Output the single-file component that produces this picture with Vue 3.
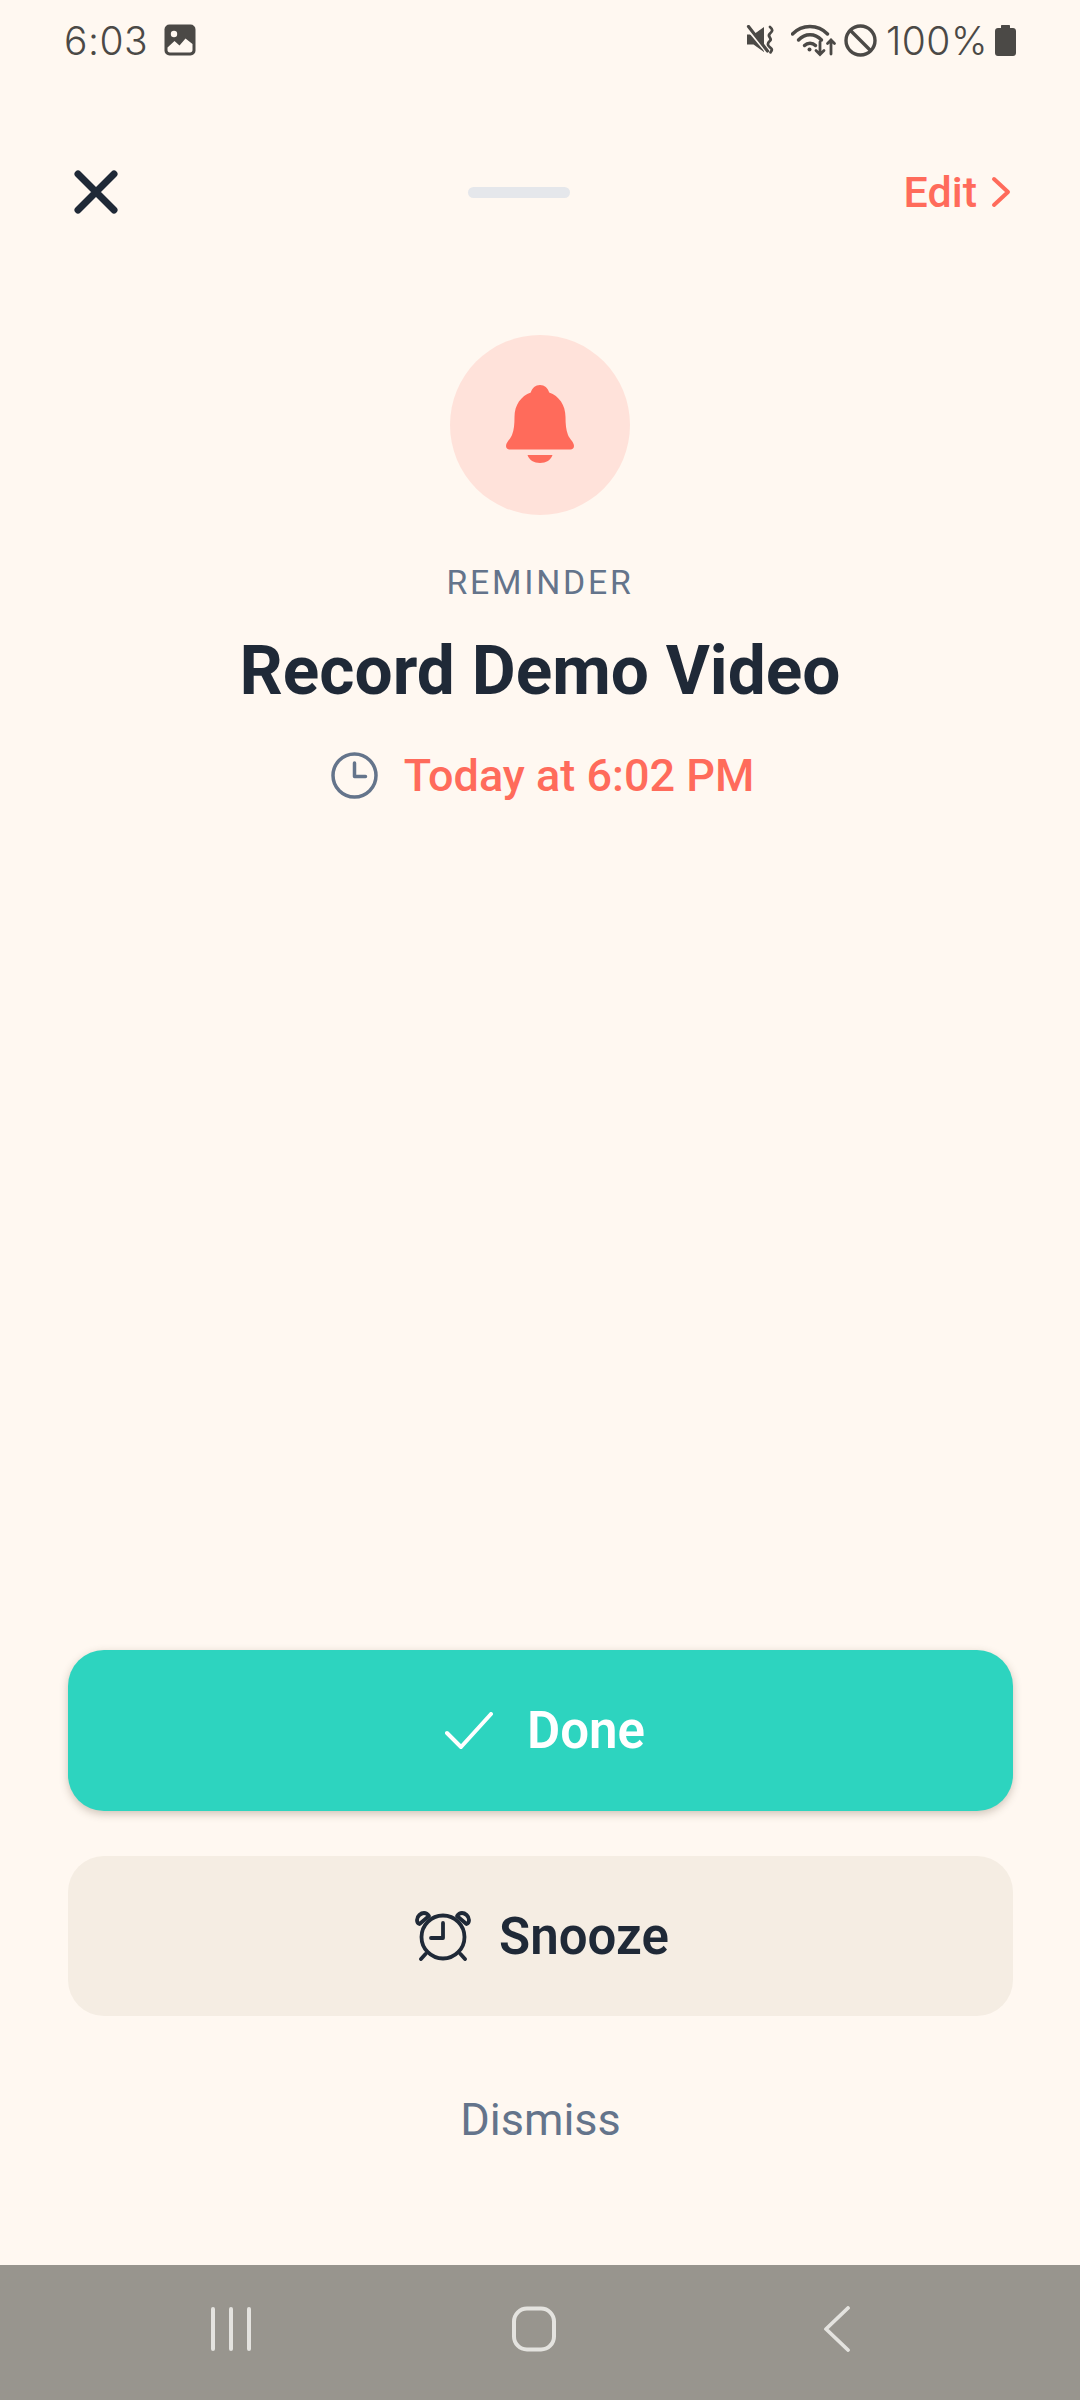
<script setup>
const title = 'Record Demo Video'
const when = 'Today at 6:02 PM'
</script>

<template>
  <div class="screen">
    <div class="status">
      <div class="status-left">
        <span class="time">6:03</span>
        <svg class="ic-photo" width="32" height="32" viewBox="0 0 32 32">
          <rect width="31" height="31" x="0.5" y="0.5" rx="5" fill="#4b4946" />
          <circle cx="10" cy="10" r="3.2" fill="#fff8f1" />
          <path d="M3.5 23.5 10.5 17l5 4.5 6-7 7 5.5v6c0 1.6-1 2.5-2.5 2.5h-20C4.400 28.500 3.500 27.500 3.500 26z" fill="#fff8f1" />
        </svg>
      </div>
      <div class="status-right">
        <svg class="ic-mute" width="30" height="30" viewBox="0 0 30 30" fill="none">
          <path d="M1 9.500h6.500L18 2v25L7.500 19.500H1z" fill="#4b4946" />
          <path d="M0 1.500 21 27" stroke="#fff8f1" stroke-width="3.500" />
          <path d="M2.500 1.500 21.500 26" stroke="#4b4946" stroke-width="3.200" stroke-linecap="round" />
          <path d="M24 2c3 2.500 3 4-.2 6.800s3 4.500.2 7-2.800 4.500 0 6.500 2 3 .5 5" stroke="#4b4946" stroke-width="2.800" stroke-linecap="round" stroke-linejoin="round" />
        </svg>
        <svg class="ic-wifi" width="46" height="34" viewBox="0 0 46 34" fill="none" stroke="#4b4946" stroke-linecap="round">
          <path d="M1.500 11C11 1 27 1 36.500 11" stroke-width="3.400" />
          <path d="M7.500 17C14 10 24 10 30.500 17" stroke-width="3.400" />
          <path d="M13.500 22.500c3-3 8-3 11 0" stroke-width="3.400" />
          <circle cx="18.500" cy="26.500" r="2" fill="#4b4946" stroke="none" />
          <path d="M29 19v12M25 27.500l4 4 4-4" stroke-width="2.800" />
          <path d="M40 31V17M36.500 20.500 40 17l3.500 3.500" stroke-width="2.800" />
        </svg>
        <svg class="ic-block" width="33" height="33" viewBox="0 0 33 33" fill="none" stroke="#4b4946" stroke-width="3.400">
          <circle cx="16.500" cy="16.500" r="14.500" />
          <path d="M6.500 6.500 26.500 26.500" />
        </svg>
        <span class="pct">100%</span>
        <svg class="ic-batt" width="21" height="31" viewBox="0 0 21 31">
          <path d="M7 0h7c.6 0 1 .4 1 1v2h3c1.700 0 3 1.300 3 3v22c0 1.700-1.300 3-3 3H3c-1.700 0-3-1.300-3-3V6c0-1.700 1.300-3 3-3h3V1c0-.6.4-1 1-1z" fill="#4b4946" />
        </svg>
      </div>
    </div>

    <div class="topbar">
      <svg class="close" width="44" height="44" viewBox="0 0 44 44" fill="none" stroke="#1f2937" stroke-width="7" stroke-linecap="round">
        <path d="M4 4 40 40M40 4 4 40" />
      </svg>
      <span class="handle"></span>
      <div class="edit">
        <span>Edit</span>
        <svg width="20" height="32" viewBox="0 0 20 32" fill="none" stroke="#ff6b5b" stroke-width="4" stroke-linecap="round" stroke-linejoin="round">
          <path d="M3 3 17 16 3 29" />
        </svg>
      </div>
    </div>

    <div class="hero">
      <div class="bell-wrap">
        <svg class="bell" width="68" height="78" viewBox="0 0 68 78">
          <path d="M34 0c4.500 0 8 3 9.200 7.500C53 11 59.500 20 59.500 32c0 7 .5 13 2.500 18 1.500 4 6 7 6 11 0 2-1.500 3.500-3.500 3.500h-61C1.500 64.500 0 63 0 61c0-4 4.500-7 6-11 2-5 2.500-11 2.500-18C8.500 20 15 11 24.800 7.500 26 3 29.500 0 34 0z" fill="#ff6b5b" />
          <path d="M21.500 70h25C45 75 40 78 34 78s-11-3-12.500-8z" fill="#ff6b5b" />
        </svg>
      </div>
      <div class="label">REMINDER</div>
      <h1 class="title">{{ title }}</h1>
      <div class="when">
        <svg width="47" height="47" viewBox="0 0 47 47" fill="none" stroke="#64748b" stroke-width="3.500" stroke-linecap="round" stroke-linejoin="round">
          <circle cx="23.500" cy="23.500" r="21.500" />
          <path d="M23.500 11v13.500h11" />
        </svg>
        <span>{{ when }}</span>
      </div>
    </div>

    <div class="actions">
      <button class="btn done">
        <svg width="48" height="38" viewBox="0 0 48 38" fill="none" stroke="#fff" stroke-width="4" stroke-linecap="round" stroke-linejoin="round">
          <path d="M2 21 16 35 46 2" />
        </svg>
        <span>Done</span>
      </button>
      <button class="btn snooze">
        <svg width="56" height="50" viewBox="0 0 56 50" fill="none" stroke="#1f2937" stroke-width="3.800" stroke-linecap="round" stroke-linejoin="round">
          <circle cx="28" cy="26" r="21.500" />
          <path d="M28 12v15H16" />
          <path d="M6 48l4.500-5M50 48l-4.500-5" />
          <path d="M2 9c0-4 4-7 7-7 2 0 4 1.500 5 3L4.500 13C3 12.500 2 11 2 9z" />
          <path d="M54 9c0-4-4-7-7-7-2 0-4 1.500-5 3l9.500 8C53 12.500 54 11 54 9z" />
        </svg>
        <span>Snooze</span>
      </button>
      <div class="dismiss">Dismiss</div>
    </div>

    <div class="nav">
      <div class="nav-cell">
        <svg width="42" height="46" viewBox="0 0 42 46" stroke="#e4e3df" stroke-width="4" stroke-linecap="round">
          <path d="M3 3v40M21 3v40M39 3v40" />
        </svg>
      </div>
      <div class="nav-cell">
        <svg width="46" height="46" viewBox="0 0 46 46" fill="none" stroke="#e4e3df" stroke-width="4">
          <rect x="3" y="2.500" width="40" height="41" rx="13" />
        </svg>
      </div>
      <div class="nav-cell">
        <svg width="28" height="46" viewBox="0 0 28 46" fill="none" stroke="#e4e3df" stroke-width="3.800" stroke-linecap="round" stroke-linejoin="round">
          <path d="M25 2 3 23 25 44" />
        </svg>
      </div>
    </div>
  </div>
</template>

<style>
html,
body {
  margin: 0;
  background: #fff8f1;
}
</style>

<style scoped>
.screen {
  width: 1080px;
  height: 2400px;
  display: flex;
  flex-direction: column;
  background: #fff8f1;
  font-family: Roboto, "Liberation Sans", sans-serif;
  overflow: hidden;
}

.status {
  height: 80px;
  box-sizing: border-box;
  padding: 0 64px 0 64px;
  display: flex;
  justify-content: space-between;
  align-items: center;
  color: #4b4946;
  font-family: Inter, Roboto, sans-serif;
  font-size: 39px;
  font-weight: 300;
  letter-spacing: 0.5px;
}
.status-left,
.status-right {
  display: flex;
  align-items: center;
}
.status-left {
  gap: 16px;
}
.ic-wifi {
  margin-left: 15px;
}
.ic-block {
  margin-left: 7px;
}
.pct {
  margin-left: 9px;
}
.ic-batt {
  margin-left: 7px;
}

.topbar {
  margin-top: 80px;
  height: 64px;
  padding: 0 69px 0 74px;
  display: flex;
  align-items: center;
  justify-content: space-between;
  position: relative;
}
.handle {
  position: absolute;
  left: 468px;
  top: 27px;
  width: 102px;
  height: 11px;
  border-radius: 6px;
  background: #e5e7eb;
}
.edit {
  display: flex;
  align-items: center;
  gap: 14px;
  color: #ff6b5b;
  font-size: 43px;
  font-weight: 500;
}

.hero {
  margin-top: 111px;
  display: flex;
  flex-direction: column;
  align-items: center;
}
.bell-wrap {
  width: 180px;
  height: 180px;
  border-radius: 50%;
  background: #ffe2da;
  display: flex;
  align-items: center;
  justify-content: center;
}
.bell {
  margin-bottom: 3px;
}
.label {
  margin-top: 48px;
  color: #64748b;
  font-size: 33.750px;
  line-height: 40px;
  letter-spacing: 2.800px;
}
.title {
  margin: 24px 0 0;
  color: #1f2937;
  font-size: 67.600px;
  line-height: 88px;
  font-weight: 700;
}
.when {
  margin-top: 34px;
  padding-left: 5px;
  display: flex;
  align-items: center;
  gap: 26px;
  color: #ff6b5b;
  font-size: 45px;
  font-weight: 500;
}

.actions {
  margin-top: auto;
  padding: 0 67px 0 68px;
  display: flex;
  flex-direction: column;
  align-items: stretch;
}
.btn {
  border: 0;
  border-radius: 36px;
  display: flex;
  align-items: center;
  justify-content: center;
  font-family: inherit;
  font-size: 51px;
  font-weight: 600;
}
.done {
  height: 161px;
  gap: 34px;
  padding-left: 15px;
  background: #2dd4bf;
  color: #fff;
  box-shadow: 0 3px 8px rgba(80, 60, 40, 0.28);
}
.snooze {
  height: 160px;
  gap: 28px;
  padding-left: 9px;
  margin-top: 45px;
  background: #f5ede3;
  color: #1f2937;
}
.dismiss {
  margin-top: 76px;
  margin-bottom: 117px;
  text-align: center;
  color: #64748b;
  font-size: 45px;
  line-height: 56px;
}

.nav {
  height: 135px;
  flex-shrink: 0;
  box-sizing: border-box;
  padding: 0 12px 7px 0;
  display: grid;
  grid-template-columns: repeat(3, 303px);
  justify-content: center;
  align-items: center;
  background: #98958e;
}
.nav-cell {
  display: flex;
  justify-content: center;
}
</style>
